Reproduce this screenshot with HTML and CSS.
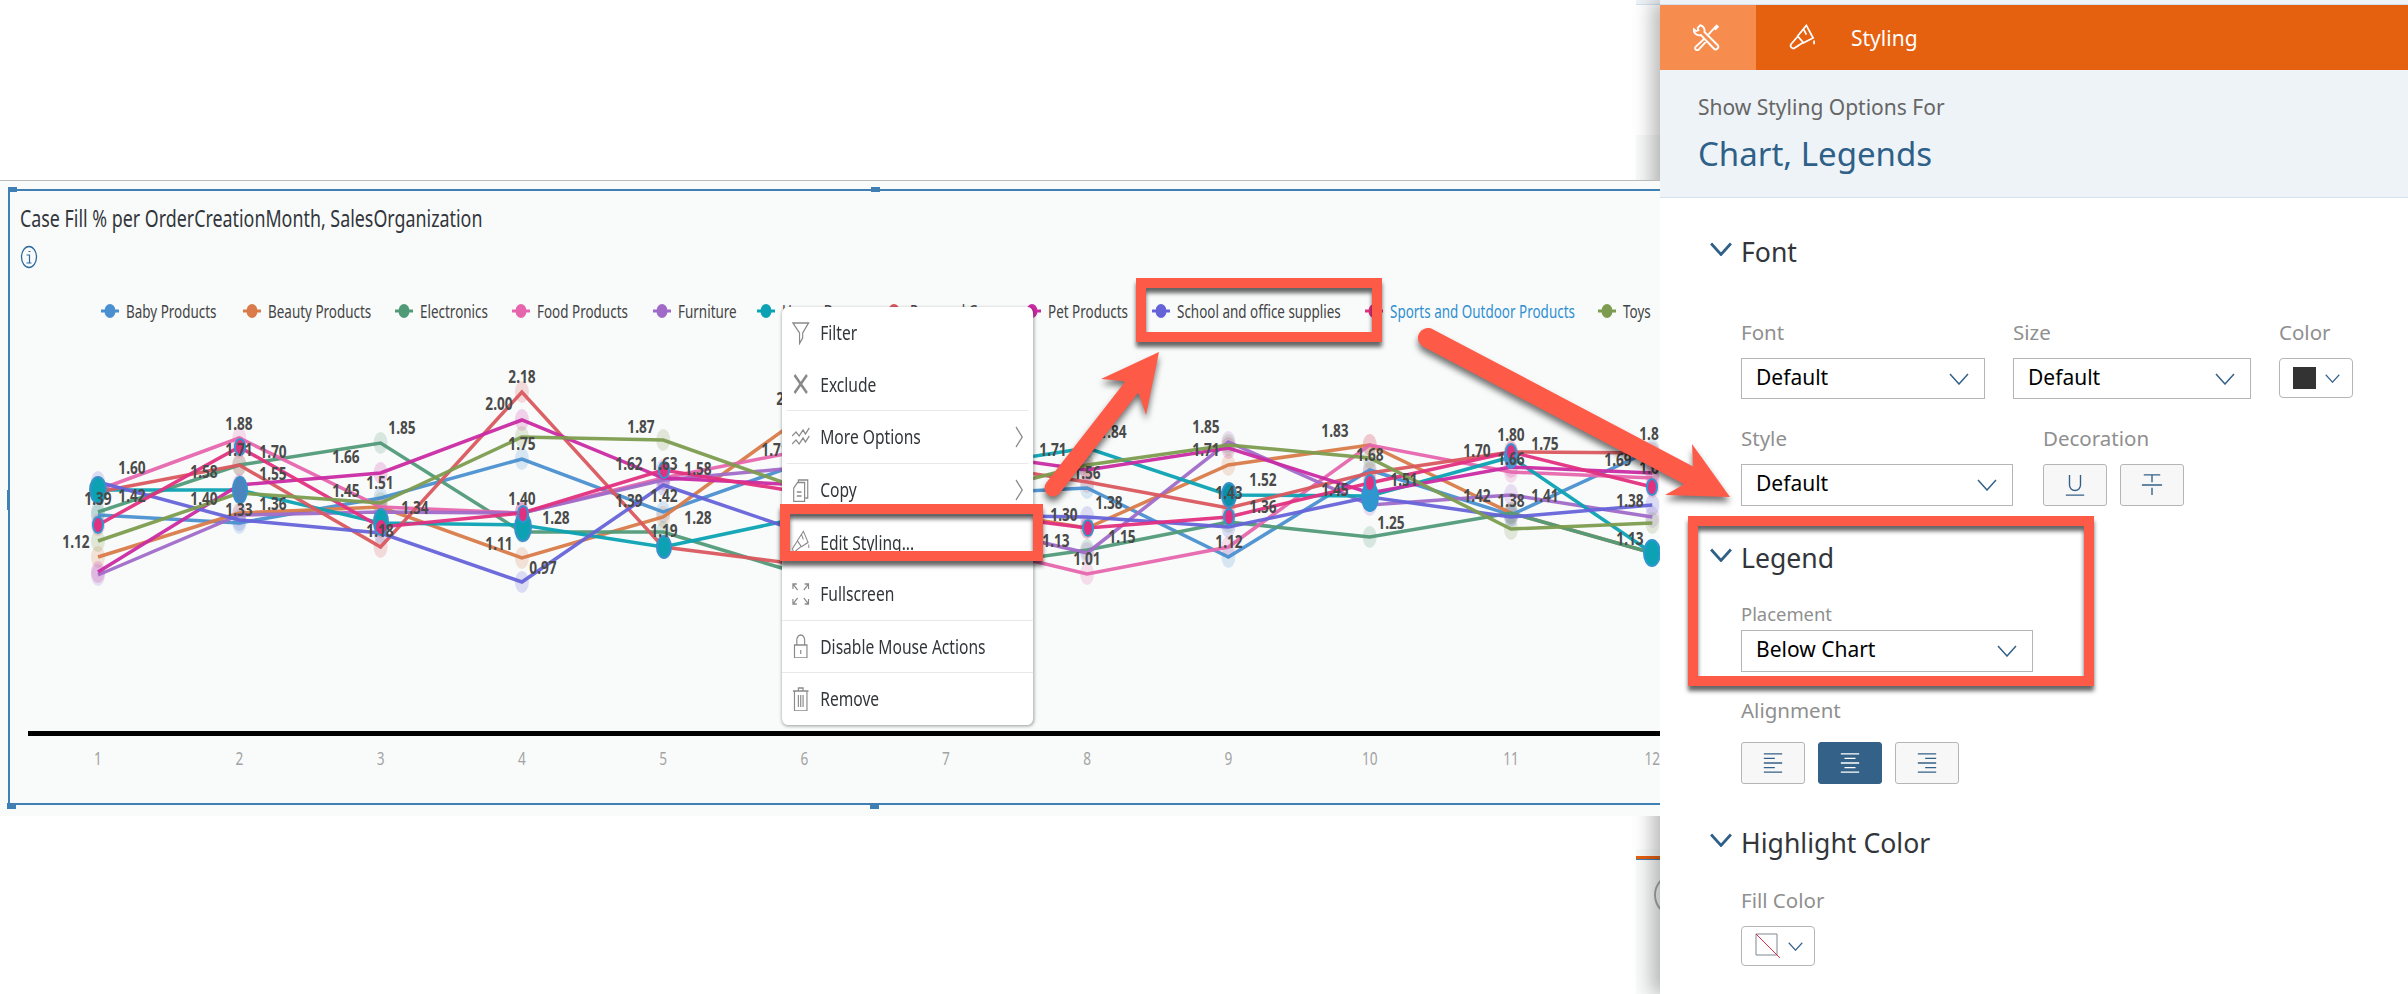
FILE: index.html
```html
<!DOCTYPE html>
<html lang="en">
<head>
    <meta charset="UTF-8">
    <title>Chart styling</title>
    <link rel="stylesheet" href="styles.css">
</head>
<body>

<svg class="defs" width="0" height="0">
    <symbol id="i-chev" viewBox="0 0 20 12"><path d="M1 1l9 10 9-10"/></symbol>
    <symbol id="i-brush" viewBox="0 0 28 28"><path d="M18 1.500l7 13-10 5-6-7zM15 5l3 6M9 13l-6.500 7.500a2.800 2.800 0 0 0 4.200 3.800L15 19M26 17v4"/></symbol>
</svg>

<div class="page">
    <div class="work">
        <div class="peek-top"></div>
        <div class="peek-line"></div>
        <div class="chart-area">
            <svg id="chart" width="1660" height="636" viewBox="0 180 1660 636"></svg>
        </div>
        <div class="peek-bottom"><span class="peek-circle"></span></div>
    </div>

    <div class="panel">
        <div class="panel-top"></div>
        <div class="tabs">
            <div class="tab tab-tools">
                <svg class="tab-icon" viewBox="0 0 26 26"><path d="M7 1.200L4.500 3.800 5.200 6 3 6.700.8 5a5.200 5.200 0 0 0 6.800 5.600L20 23.600a2.400 2.400 0 0 0 3.600-3.400L11 7.600A5.200 5.200 0 0 0 7 1.200zM10.500 14.500l-8 7.500a2 2 0 0 0 2.800 2.800l7.500-8M15 10l5-5.500"/><path class="tool-tip" d="M20.500 5l3.500-3.500"/></svg>
            </div>
            <div class="tab">
                <svg class="tab-icon"><use href="#i-brush"/></svg>
                <span>Styling</span>
            </div>
        </div>
        <div class="sub-head">
            <div class="sub-label">Show Styling Options For</div>
            <div class="sub-title">Chart, Legends</div>
        </div>

        <div class="sections">
            <div class="sec-head sec-font"><svg class="sec-chev"><use href="#i-chev"/></svg>Font</div>
            <div class="row row-font">
                <div class="field">
                    <label>Font</label>
                    <div class="select w-font">Default<svg class="chev"><use href="#i-chev"/></svg></div>
                </div>
                <div class="field">
                    <label>Size</label>
                    <div class="select w-size">Default<svg class="chev"><use href="#i-chev"/></svg></div>
                </div>
                <div class="field">
                    <label>Color</label>
                    <div class="color-btn"><span class="swatch"></span><svg class="chev-sm"><use href="#i-chev"/></svg></div>
                </div>
            </div>
            <div class="row row-style">
                <div class="field">
                    <label>Style</label>
                    <div class="select w-style">Default<svg class="chev"><use href="#i-chev"/></svg></div>
                </div>
                <div class="field">
                    <label>Decoration</label>
                    <div class="btn-group">
                        <div class="tool-btn"><svg viewBox="0 0 24 24"><path d="M6 1v11a6 6 0 0 0 12 0V1M2 23h20"/></svg></div>
                        <div class="tool-btn"><svg viewBox="0 0 24 24"><path d="M3 1h18M12 1v8M1 12h22M12 15v8"/></svg></div>
                    </div>
                </div>
            </div>

            <div class="sec-head sec-legend"><svg class="sec-chev"><use href="#i-chev"/></svg>Legend</div>
            <div class="field f-place">
                <label class="small">Placement</label>
                <div class="select w-place">Below Chart<svg class="chev"><use href="#i-chev"/></svg></div>
            </div>
            <div class="field f-align">
                <label>Alignment</label>
                <div class="btn-group">
                    <div class="tool-btn"><svg viewBox="0 0 24 24"><path d="M2 2h20M2 7h12M2 12h20M2 17h12M2 22h20"/></svg></div>
                    <div class="tool-btn active"><svg viewBox="0 0 24 24"><path d="M2 2h20M6 7h12M2 12h20M6 17h12M2 22h20"/></svg></div>
                    <div class="tool-btn"><svg viewBox="0 0 24 24"><path d="M2 2h20M10 7h12M2 12h20M10 17h12M2 22h20"/></svg></div>
                </div>
            </div>

            <div class="sec-head sec-highlight"><svg class="sec-chev"><use href="#i-chev"/></svg>Highlight Color</div>
            <div class="field f-fill">
                <label>Fill Color</label>
                <div class="color-btn">
                    <svg class="no-fill" viewBox="0 0 26 26"><path class="nf-box" d="M1 1h21v21H1z"/><path class="nf-line" d="M1 1l24 24"/></svg>
                    <svg class="chev-sm"><use href="#i-chev"/></svg>
                </div>
            </div>
        </div>
    </div>

    <div class="menu">
        <div class="menu-item"><svg viewBox="0 0 24 24"><path d="M2 2h20l-7.500 10v5l-4 5.500V12z"/></svg>Filter</div>
        <div class="menu-item"><svg class="thick" viewBox="0 0 24 24"><path d="M4 3l16 18M20 3L4 21"/></svg>Exclude</div>
        <div class="menu-sep inset"></div>
        <div class="menu-item"><svg viewBox="0 0 24 24"><path d="M1 11l5-4 4 4 5-6 3 4 5-6M1 19l5-4 4 4 5-6 3 4 5-6"/></svg>More Options<svg class="arrow" viewBox="0 0 12 24"><path d="M2 2l8 10-8 10"/></svg></div>
        <div class="menu-sep inset"></div>
        <div class="menu-item"><svg viewBox="0 0 24 24"><path d="M9 4.500V2h12v18h-3M8 4.500h9v19H3V10zM7 14h6M7 18h6"/></svg>Copy<svg class="arrow" viewBox="0 0 12 24"><path d="M2 2l8 10-8 10"/></svg></div>
        <div class="menu-sep"></div>
        <div class="menu-item"><svg><use href="#i-brush"/></svg>Edit Styling...</div>
        <div class="menu-item"><svg viewBox="0 0 24 24"><path d="M2 7V2h5M2 2l6 6M22 7V2h-5M22 2l-6 6M2 17v5h5M2 22l6-6M22 17v5h-5M22 22l-6-6"/></svg>Fullscreen</div>
        <div class="menu-sep"></div>
        <div class="menu-item"><svg viewBox="0 0 24 24"><path d="M4 11h16v13H4zM7 11V6a5 5 0 0 1 10 0v5M12 16v4"/></svg>Disable Mouse Actions</div>
        <div class="menu-sep"></div>
        <div class="menu-item"><svg viewBox="0 0 24 24"><path d="M2 4h20M9 4V1h6v3M4 4v20h16V4M9 8v12M12 8v12M15 8v12"/></svg>Remove</div>
    </div>

    <div class="mark mark-legend-item"></div>
    <div class="mark mark-edit"></div>
    <div class="mark mark-legend"></div>
    <svg class="arrows" width="2408" height="994">
        <g>
            <path class="shaft" stroke-width="17" d="M1053 488L1131 388"/>
            <path class="head" d="M1159 352L1101 379 1123 381 1139 394 1146 415z"/>
        </g>
        <g>
            <path class="shaft" stroke-width="20" d="M1428 338L1688 475"/>
            <path class="head" d="M1730 497L1692 444 1693 466 1683 485 1665 495z"/>
        </g>
    </svg>
</div>

<script src="chart.js"></script>
</body>
</html>
```

FILE: styles.css
```css
* {
    box-sizing: border-box;
}
body {
    margin: 0;
    background: #fff;
    font-family: "Noto Sans", "Open Sans", sans-serif;
    color: #32363a;
    overflow: hidden;
}
.defs {
    position: absolute;
}
.page {
    position: relative;
    display: flex;
    width: 2408px;
    height: 994px;
    overflow: hidden;
}

/* left side, chart */
.work {
    position: relative;
    width: 1660px;
    padding-top: 180px;
}
.chart-area {
    position: relative;
    z-index: 1;
    height: 636px;
    background: #f9fbfb;
    border-top: 1px solid #bbb;
}
.chart-area svg {
    display: block;
    margin-top: -1px;
}
.peek-top {
    position: absolute;
    left: 1636px;
    top: 135px;
    width: 24px;
    height: 45px;
    background: #f8fafa;
}
.peek-line {
    position: absolute;
    left: 1636px;
    top: 0;
    width: 24px;
    height: 5px;
    background: #eef3f8;
    border-bottom: 1px solid #d3e0ee;
}
.peek-bottom {
    position: absolute;
    left: 1636px;
    top: 849px;
    width: 24px;
    height: 145px;
    background: #f9fbfb;
    overflow: hidden;
}
.peek-bottom::before {
    content: "";
    display: block;
    margin-top: 7px;
    height: 3px;
    background: #e5600f;
    border-bottom: 1px solid #3f7fb3;
}
.peek-circle {
    position: absolute;
    left: 18px;
    top: 24px;
    width: 44px;
    height: 44px;
    border: 2px solid #a9a9a9;
    border-radius: 50%;
}
.ch-title {
    font-size: 23.500px;
    fill: #32363a;
}
.ch-legend {
    font-size: 17.700px;
    fill: #444;
}
.ch-legend.hover {
    fill: #2f8fd0;
}
.ch-value {
    font-size: 18px;
    font-weight: 700;
    fill: #4a4a4a;
}
.ch-month {
    font-size: 18px;
    fill: #a3a3a3;
}
.frame {
    fill: none;
    stroke: #3f7fb3;
    stroke-width: 2;
}
.grip {
    fill: #3f7fb3;
}

/* right side, styling panel */
.panel {
    position: relative;
    width: 748px;
    height: 994px;
    background: #fff;
    box-shadow: -8px 0 18px rgba(0, 0, 0, 0.28);
}
.panel-top {
    height: 5px;
    background: #eef3f8;
    border-bottom: 1px solid #d3e0ee;
}
.tabs {
    display: flex;
    height: 65px;
    background: #e5600f;
    color: #fff;
    font-size: 21px;
}
.tab {
    display: flex;
    align-items: center;
    padding-left: 33px;
    gap: 35px;
}
.tab-tools {
    width: 96px;
    background: #f68d4f;
}
.tab-icon {
    width: 27px;
    height: 27px;
    fill: none;
    stroke: #fff;
    stroke-width: 1.800;
}
.tool-tip {
    stroke-width: 3.500;
}
.sub-head {
    height: 128px;
    padding: 20px 0 0 38px;
    background: #eef3f8;
    border-bottom: 1px solid #d5e1ec;
}
.sub-label {
    font-size: 21px;
    line-height: 34px;
    color: #666;
}
.sub-title {
    font-size: 33px;
    line-height: 48px;
    margin-top: 6px;
    color: #2f6088;
}
.sections {
    padding-left: 81px;
}
.sec-head {
    position: relative;
    height: 36px;
    font-size: 26.600px;
    line-height: 36px;
    color: #32363a;
}
.sec-chev {
    position: absolute;
    left: -31.500px;
    top: 8px;
    width: 22px;
    height: 14px;
    fill: none;
    stroke: #2f6088;
    stroke-width: 2.500;
}
.sec-font {
    margin-top: 36px;
}
.sec-legend {
    margin-top: 34px;
}
.sec-highlight {
    margin-top: 41px;
}
.row {
    display: flex;
}
.row-font {
    gap: 28px;
    margin-top: 48px;
}
.row-style {
    gap: 30px;
    margin-top: 25px;
}
label {
    display: block;
    height: 28px;
    margin-bottom: 12px;
    font-size: 20.500px;
    line-height: 28px;
    color: #8f8f8f;
}
label.small {
    font-size: 18.400px;
    margin-bottom: 2px;
}
.select {
    position: relative;
    height: 41px;
    padding-left: 14px;
    font-size: 21px;
    line-height: 36px;
    color: #000;
    background: #fff;
    border: 1px solid #b5b5b5;
}
.w-font {
    width: 244px;
}
.w-size {
    width: 238px;
}
.w-style {
    width: 272px;
    height: 42px;
}
.w-place {
    width: 292px;
    height: 42px;
}
.chev {
    position: absolute;
    right: 15px;
    top: 14px;
    width: 20px;
    height: 12px;
    fill: none;
    stroke: #346187;
    stroke-width: 1.500;
}
.color-btn {
    display: flex;
    align-items: center;
    gap: 9px;
    width: 74px;
    height: 40px;
    padding-left: 13px;
    border: 1px solid #b5b5b5;
    border-radius: 4px;
}
.swatch {
    width: 23px;
    height: 22px;
    background: #333;
}
.chev-sm {
    width: 15px;
    height: 9px;
    fill: none;
    stroke: #346187;
    stroke-width: 1.500;
}
.no-fill {
    width: 26px;
    height: 26px;
    margin-right: -2px;
    fill: none;
}
.nf-box {
    stroke: #7c8791;
}
.nf-line {
    stroke: #e5294a;
}
.btn-group {
    display: flex;
    gap: 13px;
}
.tool-btn {
    display: flex;
    align-items: center;
    justify-content: center;
    width: 64px;
    height: 42px;
    background: #f7f7f7;
    border: 1px solid #b5b5b5;
    border-radius: 3px;
}
.tool-btn svg {
    width: 22px;
    height: 22px;
    fill: none;
    stroke: #346187;
    stroke-width: 1.500;
}
.tool-btn.active {
    background: #346187;
    border-color: #346187;
}
.tool-btn.active svg {
    stroke: #fff;
}
.f-place {
    margin-top: 24px;
}
.f-align {
    margin-top: 24px;
}
.f-align label {
    margin-bottom: 18px;
}
.f-fill {
    margin-top: 25px;
}

/* context menu, squeezed like the chart it sits on */
.menu {
    position: absolute;
    left: 782px;
    top: 307px;
    z-index: 2;
    width: 322px;
    background: #fff;
    border-radius: 7px;
    box-shadow: 0 1px 4px rgba(0, 0, 0, 0.4);
    transform: scaleX(0.78);
    transform-origin: left top;
}
.menu-item {
    position: relative;
    display: flex;
    align-items: center;
    gap: 13px;
    height: 51.600px;
    padding-left: 12px;
    font-size: 20px;
    color: #32363a;
}
.menu-item svg {
    width: 24px;
    height: 24px;
    fill: none;
    stroke: #8a8a8a;
    stroke-width: 1.500;
}
.menu-item svg.thick {
    stroke-width: 3;
}
.menu-item svg.arrow {
    position: absolute;
    right: 12px;
    top: 14px;
    width: 12px;
}
.menu-sep {
    height: 1px;
    background: #e8e8e8;
}
.menu-sep.inset {
    margin: 0 6px;
}

/* red annotations on top of the screenshot */
.mark {
    position: absolute;
    z-index: 3;
    border: 10px solid #fe5a48;
    filter: drop-shadow(0 5px 2px rgba(0, 0, 0, 0.6));
}
.mark-legend-item {
    left: 1136px;
    top: 278px;
    width: 246px;
    height: 64px;
}
.mark-edit {
    left: 780px;
    top: 504px;
    width: 263px;
    height: 57px;
}
.mark-legend {
    left: 1688px;
    top: 516px;
    width: 406px;
    height: 170px;
}
.arrows {
    position: absolute;
    left: 0;
    top: 0;
    z-index: 3;
    filter: drop-shadow(0 5px 3px rgba(0, 0, 0, 0.55));
}
.shaft {
    fill: none;
    stroke: #fe5a48;
    stroke-linecap: round;
}
.head {
    fill: #fe5a48;
}
```

FILE: chart.js
```js
const NS = 'http://www.w3.org/2000/svg';
const chart = document.getElementById('chart');
const SQUEEZE = 0.76;

function add(tag, attrs, text) {
    const el = document.createElementNS(NS, tag);
    Object.keys(attrs).forEach(k => el.setAttribute(k, attrs[k]));
    if (text) el.textContent = text;
    chart.appendChild(el);
    return el;
}

function label(cls, x, y, text, anchor) {
    add('text', {
        class: cls,
        transform: `translate(${x},${y}) scale(${SQUEEZE},1)`,
        'text-anchor': anchor || 'middle',
        'dominant-baseline': 'central'
    }, text);
}

const monthX = i => 98 + 141.3 * i;

// y pixel of each series at months 1..12
const series = [
    { name: 'Baby Products', color: '#4a90d0', mark: 110, ys: [515, 523, 498, 459, 512, 462, 495, 488, 557, 470, 515, 450] },
    { name: 'Beauty Products', color: '#d97b4a', mark: 252, ys: [557, 513, 507, 558, 517, 415, 505, 528, 465, 445, 513, 553] },
    { name: 'Electronics', color: '#519a78', mark: 404, ys: [512, 465, 443, 532, 532, 575, 570, 550, 522, 537, 513, 553] },
    { name: 'Food Products', color: '#e666ad', mark: 521, ys: [490, 438, 507, 513, 478, 450, 540, 574, 547, 445, 472, 478] },
    { name: 'Furniture', color: '#a06bc8', mark: 662, ys: [575, 515, 512, 513, 480, 467, 520, 553, 442, 505, 495, 517] },
    { name: 'Home Decor', color: '#0ca2b3', mark: 766, ys: [490, 490, 523, 525, 547, 517, 470, 448, 495, 496, 457, 553] },
    { name: 'Personal Care', color: '#d9585f', mark: 894, ys: [492, 465, 547, 392, 547, 565, 460, 482, 508, 473, 452, 453] },
    { name: 'Pet Products', color: '#c92ba3', mark: 1032, ys: [572, 485, 473, 420, 478, 485, 450, 470, 448, 493, 467, 473] },
    { name: 'School and office supplies', color: '#6663d9', mark: 1161, ys: [482, 520, 533, 582, 485, 533, 515, 517, 527, 497, 517, 505] },
    { name: 'Sports and Outdoor Products', color: '#e23080', mark: 1374, ys: [525, 447, 527, 513, 470, 493, 510, 528, 517, 483, 452, 487], hover: true },
    { name: 'Toys', color: '#7d9c4f', mark: 1607, ys: [541, 493, 503, 437, 440, 490, 500, 465, 445, 458, 529, 523] }
];

const values = [
    [132, 467, '1.60'], [98, 498, '1.39'], [132, 495, '1.42'], [76, 541, '1.12'],
    [239, 423, '1.88'], [204, 471, '1.58'], [239, 449, '1.71'], [273, 451, '1.70'],
    [273, 473, '1.55'], [204, 498, '1.40'], [239, 509, '1.33'], [273, 503, '1.36'],
    [346, 456, '1.66'], [402, 427, '1.85'], [346, 490, '1.45'], [380, 482, '1.51'],
    [415, 507, '1.34'], [380, 530, '1.18'], [522, 376, '2.18'], [499, 403, '2.00'],
    [522, 443, '1.75'], [522, 498, '1.40'], [556, 517, '1.28'], [499, 543, '1.11'],
    [543, 567, '0.97'], [641, 426, '1.87'], [629, 463, '1.62'], [664, 463, '1.63'],
    [698, 468, '1.58'], [629, 500, '1.39'], [664, 495, '1.42'], [698, 517, '1.28'],
    [664, 530, '1.19'], [790, 398, '2.04'], [775, 449, '1.71'], [1053, 449, '1.71'],
    [1113, 431, '1.84'], [1087, 472, '1.56'], [1109, 502, '1.38'], [1064, 514, '1.30'],
    [1056, 540, '1.13'], [1122, 536, '1.15'], [1087, 558, '1.01'], [1206, 426, '1.85'],
    [1206, 449, '1.71'], [1229, 492, '1.43'], [1263, 479, '1.52'], [1263, 506, '1.36'],
    [1229, 541, '1.12'], [1335, 430, '1.83'], [1370, 454, '1.68'], [1335, 489, '1.45'],
    [1404, 479, '1.51'], [1391, 522, '1.25'], [1511, 434, '1.80'], [1545, 443, '1.75'],
    [1477, 450, '1.70'], [1511, 458, '1.66'], [1477, 495, '1.42'], [1511, 500, '1.38'],
    [1545, 495, '1.41'], [1618, 459, '1.69'], [1649, 433, '1.8'], [1649, 467, '1.6'],
    [1630, 500, '1.38'], [1630, 538, '1.13']
];

// hovered points: [x, y, fill, ring, rx, ry]
const dots = [
    [98, 490, '#0ca2b3', '#3a90c8', 8, 13], [98, 525, '#e23080', '#2f96d0', 5, 8],
    [240, 490, '#4a85c0', '#3a90c8', 7, 13], [240, 447, '#e23080', '#2f96d0', 5, 8],
    [381, 522, '#0ca2b3', '#3a90c8', 7, 13], [381, 527, '#e23080', '#e23080', 4, 6],
    [523, 527, '#0ca2b3', '#3a90c8', 8, 14], [523, 514, '#e23080', '#2f96d0', 5, 8],
    [664, 470, '#e23080', '#2f96d0', 5, 8], [664, 547, '#0ca2b3', '#3a90c8', 7, 11],
    [1088, 528, '#e23080', '#2f96d0', 5, 8], [1229, 495, '#0c8fa8', '#3a90c8', 7, 12],
    [1229, 517, '#e23080', '#2f96d0', 5, 8], [1370, 497, '#2f96d0', '#2f96d0', 8, 14],
    [1370, 483, '#e23080', '#2f96d0', 5, 8], [1511, 457, '#4a90d0', '#4a90d0', 6, 11],
    [1511, 452, '#e23080', '#2f96d0', 5, 8], [1652, 487, '#e23080', '#2f96d0', 5, 8],
    [1652, 553, '#0ca2b3', '#2f96d0', 8, 13]
];

// selection frame
add('rect', { class: 'frame', x: 9, y: 190, width: 1700, height: 614 });
add('rect', { class: 'grip', x: 8, y: 187, width: 9, height: 5 });
add('rect', { class: 'grip', x: 871, y: 187, width: 9, height: 5 });
add('rect', { class: 'grip', x: 7, y: 490, width: 3, height: 20 });
add('rect', { class: 'grip', x: 7, y: 803, width: 9, height: 6 });
add('rect', { class: 'grip', x: 870, y: 803, width: 9, height: 6 });

// title and info icon
label('ch-title', 20, 218, 'Case Fill % per OrderCreationMonth, SalesOrganization', 'start');
add('ellipse', { cx: 29, cy: 257, rx: 7.500, ry: 10.500, fill: 'none', stroke: '#2e6a9e', 'stroke-width': 1.300 });
add('path', { d: 'M26.500 255h3v8M26.500 263h5M28.500 251.500h2', fill: 'none', stroke: '#2e6a9e', 'stroke-width': 1.200 });

// halos under the lines
series.forEach(s => s.ys.forEach((y, i) => {
    add('ellipse', { cx: monthX(i), cy: y, rx: 7, ry: 11, fill: s.color, opacity: 0.2 });
}));

series.forEach(s => {
    const points = s.ys.map((y, i) => `${monthX(i)},${y}`).join(' ');
    add('polyline', { points, fill: 'none', stroke: s.color, 'stroke-width': 3.500, opacity: 0.95 });
});

dots.forEach(d => {
    add('ellipse', { cx: d[0], cy: d[1], rx: d[4], ry: d[5], fill: d[2], stroke: d[3], 'stroke-width': 2 });
});

values.forEach(v => label('ch-value', v[0], v[1], v[2]));

// legend
series.forEach(s => {
    add('path', { d: `M${s.mark - 9} 311h18`, stroke: s.color, 'stroke-width': 3 });
    add('ellipse', { cx: s.mark, cy: 311, rx: 5.500, ry: 7, fill: s.color });
    label('ch-legend' + (s.hover ? ' hover' : ''), s.mark + 16, 311, s.name, 'start');
});

// x axis
add('rect', { x: 28, y: 731, width: 1640, height: 5, fill: '#000' });
for (let i = 0; i < 12; i++) {
    label('ch-month', monthX(i), 758, String(i + 1));
}
```
